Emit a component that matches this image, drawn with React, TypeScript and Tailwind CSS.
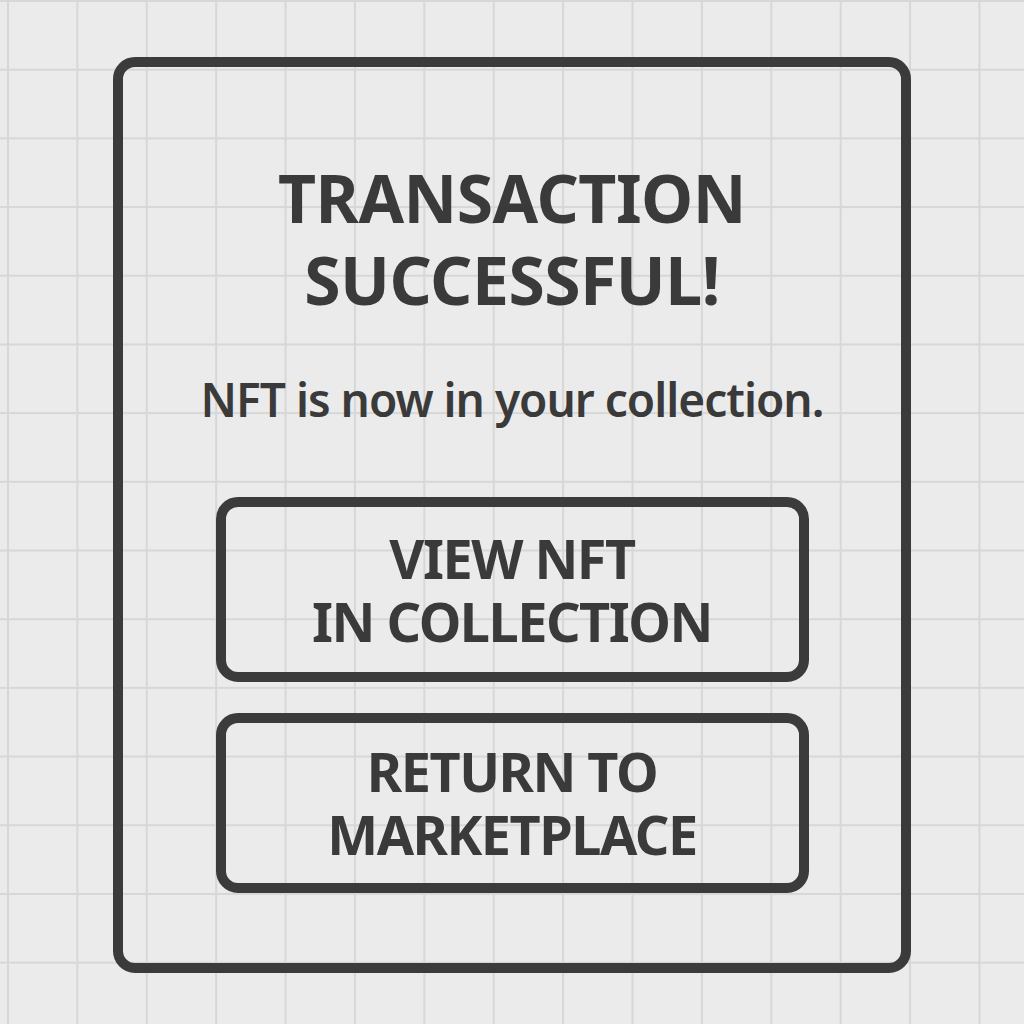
export default function App() {
  return (
    <div
      className="w-[1024px] h-[1024px] overflow-hidden bg-[#ebebeb] bg-[linear-gradient(to_right,#d7d7d7_2px,transparent_2px),linear-gradient(to_bottom,#d7d7d7_2px,transparent_2px)] bg-[size:69.4px_68.7px] bg-[position:7px_0px] pt-[57px] pl-[113px] text-[#3a3a3a]"
      style={{ fontFamily: '"Noto Sans", "Open Sans", sans-serif' }}
    >
      <div className="w-[798px] h-[916px] border-[10px] border-[#3b3b3b] rounded-[22px] flex flex-col items-center pt-[89px]">
        <h1 className="text-[66px] leading-[82px] font-bold text-center tracking-[-0.5px]">
          TRANSACTION
          <br />
          SUCCESSFUL!
        </h1>
        <p className="mt-[49px] text-[46px] leading-[60px] font-semibold tracking-[-1px]">NFT is now in your collection.</p>
        <div className="mt-[68px] flex flex-col gap-[31px]">
          <button className="w-[593px] h-[185px] border-[10px] border-[#3b3b3b] rounded-[22px] text-[54px] leading-[63px] font-bold tracking-[-1.5px]">
            VIEW NFT
            <br />
            IN COLLECTION
          </button>
          <button className="w-[593px] h-[180px] border-[10px] border-[#3b3b3b] rounded-[22px] text-[54px] leading-[63px] font-bold tracking-[-1.5px]">
            RETURN TO
            <br />
            MARKETPLACE
          </button>
        </div>
      </div>
    </div>
  );
}
